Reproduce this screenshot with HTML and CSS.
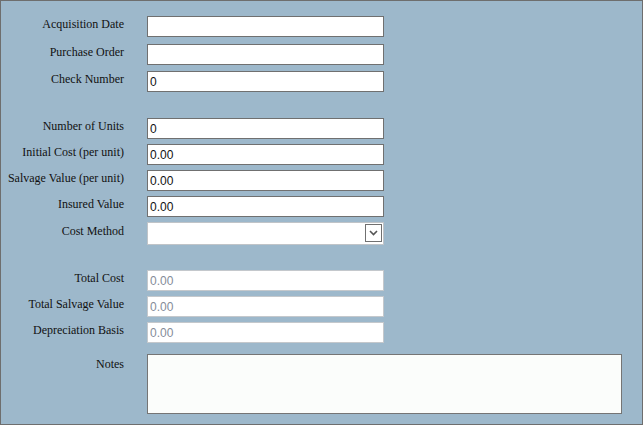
FILE: index.html
```html
<!DOCTYPE html>
<html lang="en">
<head>
    <meta charset="UTF-8">
    <meta name="viewport" content="width=device-width, initial-scale=1.0">
    <title>Asset Cost</title>
    <link rel="stylesheet" href="styles.css">
</head>
<body>
    <div class="frame">
        <form class="asset-form">
            <!-- Purchase info -->
            <div class="group group-top">
                <div class="row">
                    <label for="acq-date">Acquisition Date</label>
                    <input type="text" id="acq-date">
                </div>
                <div class="row">
                    <label for="po">Purchase Order</label>
                    <input type="text" id="po">
                </div>
                <div class="row">
                    <label for="check-no">Check Number</label>
                    <input type="text" id="check-no" value="0">
                </div>
            </div>

            <!-- Cost info -->
            <div class="group group-cost">
                <div class="row">
                    <label for="units">Number of Units</label>
                    <input type="text" id="units" value="0">
                </div>
                <div class="row">
                    <label for="initial-cost">Initial Cost (per unit)</label>
                    <input type="text" id="initial-cost" value="0.00">
                </div>
                <div class="row">
                    <label for="salvage">Salvage Value (per unit)</label>
                    <input type="text" id="salvage" value="0.00">
                </div>
                <div class="row">
                    <label for="insured">Insured Value</label>
                    <input type="text" id="insured" value="0.00">
                </div>
                <div class="row row-select">
                    <label for="cost-method">Cost Method</label>
                    <div class="select-wrap">
                        <select id="cost-method">
                            <option></option>
                        </select>
                        <span class="select-arrow">
                            <svg width="9" height="6" viewBox="0 0 9 6"><path d="M1 1 L4.5 4.5 L8 1" fill="none" stroke="#555" stroke-width="1.6"/></svg>
                        </span>
                    </div>
                </div>
            </div>

            <!-- Totals (read only) -->
            <div class="group group-totals">
                <div class="row">
                    <label for="total-cost">Total Cost</label>
                    <input type="text" id="total-cost" value="0.00" disabled>
                </div>
                <div class="row">
                    <label for="total-salvage">Total Salvage Value</label>
                    <input type="text" id="total-salvage" value="0.00" disabled>
                </div>
                <div class="row">
                    <label for="dep-basis">Depreciation Basis</label>
                    <input type="text" id="dep-basis" value="0.00" disabled>
                </div>
            </div>

            <div class="row row-notes">
                <label for="notes">Notes</label>
                <textarea id="notes"></textarea>
            </div>
        </form>
    </div>
</body>
</html>
```

FILE: styles.css
```css
html, body {
    margin: 0;
    padding: 0;
}

body {
    font-family: "Liberation Serif", "Times New Roman", serif;
    font-size: 12px;
    color: #111;
}

.frame {
    box-sizing: border-box;
    height: 425px;
    border: 1px solid #6e6e6e;
    background-color: #9db8cb;
    padding-top: 15px;
}

.group {
    display: flex;
    flex-direction: column;
    gap: 5px;
}

.group-top {
    gap: 6.5px;
}

.group-cost {
    margin-top: 26px;
}

.group-totals {
    margin-top: 25px;
}

.row {
    display: grid;
    grid-template-columns: 123px 237px;
    column-gap: 23px;
    align-items: start;
}

.row label {
    text-align: right;
    line-height: 14px;
    padding-top: 1px;
    white-space: nowrap;
}

.row input {
    box-sizing: border-box;
    height: 21px;
    width: 237px;
    margin: 0;
    padding: 1px 2px 0;
    border: 1px solid #707070;
    background: #fff;
    font-family: "Liberation Sans", Arial, sans-serif;
    font-size: 12px;
    color: #111;
    outline: none;
}

.row input:disabled {
    border-color: #c4c8cc;
    color: #848c98;
    background: #fff;
}

/* Cost method dropdown */
.row-select label {
    padding-top: 2px;
}

.select-wrap {
    position: relative;
    width: 237px;
    height: 23px;
}

.select-wrap select {
    box-sizing: border-box;
    width: 100%;
    height: 23px;
    margin: 0;
    border: 1px solid #c0c4c8;
    background: #fff;
    appearance: none;
    -webkit-appearance: none;
    font-family: "Liberation Sans", Arial, sans-serif;
    font-size: 12px;
    outline: none;
}

.select-arrow {
    position: absolute;
    top: 2px;
    right: 2px;
    box-sizing: border-box;
    width: 17px;
    height: 18px;
    border: 1px solid #707070;
    display: flex;
    align-items: center;
    justify-content: center;
    pointer-events: none;
}

.row-notes {
    margin-top: 11px;
    grid-template-columns: 123px 475px;
}

.row-notes label {
    padding-top: 3px;
}

.row-notes textarea {
    box-sizing: border-box;
    width: 475px;
    height: 60px;
    margin: 0;
    border: 1px solid #757575;
    background: #fbfdfb;
    resize: none;
    outline: none;
}
```
